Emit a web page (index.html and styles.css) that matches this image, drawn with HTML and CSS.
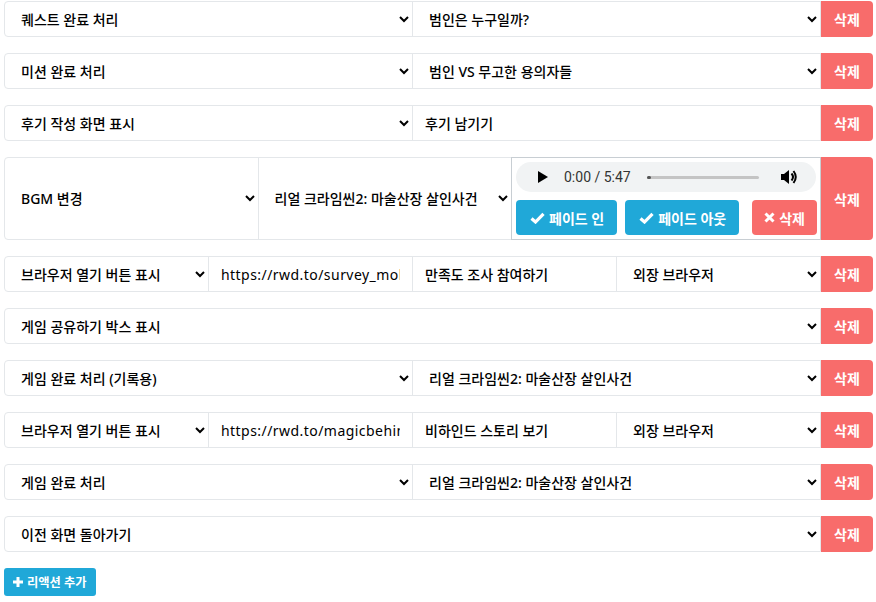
FILE: index.html
```html
<!DOCTYPE html>
<html>
<head>
  <meta charset="UTF-8">
  <title>리액션 설정</title>
  <link rel="stylesheet" href="styles.css">
</head>
<body>
  <div class="reaction-list">
    <div class="reaction-row">
      <select class="field"><option>퀘스트 완료 처리</option></select>
      <select class="field"><option>범인은 누구일까?</option></select>
      <button class="delete-button">삭제</button>
    </div>
    <div class="reaction-row">
      <select class="field"><option>미션 완료 처리</option></select>
      <select class="field"><option>범인 VS 무고한 용의자들</option></select>
      <button class="delete-button">삭제</button>
    </div>
    <div class="reaction-row">
      <select class="field"><option>후기 작성 화면 표시</option></select>
      <input class="field" type="text" value="후기 남기기">
      <button class="delete-button">삭제</button>
    </div>
    <div class="reaction-row tall">
      <select class="field"><option>BGM 변경</option></select>
      <select class="field"><option>리얼 크라임씬2: 마술산장 살인사건</option></select>
      <div class="bgm-panel">
        <div class="player">
          <svg class="play" width="12" height="12" viewBox="0 0 12 12"><path d="M1 0 L11 6 L1 12 Z" fill="#000"/></svg>
          <span class="time">0:00 / 5:47</span>
          <div class="track"><div class="track-fill"></div></div>
          <svg class="volume" width="18" height="16" viewBox="0 0 18 16">
            <path d="M1 5 H4 L9 1 V15 L4 11 H1 Z" fill="#000"/>
            <path d="M11.5 4.5 Q14.5 8 11.5 11.5" stroke="#000" stroke-width="2" fill="none"/>
            <path d="M13.5 2 Q18 8 13.5 14" stroke="#000" stroke-width="2" fill="none"/>
          </svg>
        </div>
        <div class="panel-buttons">
          <button class="small-button blue">
            <svg width="15" height="12" viewBox="0 0 15 12"><path d="M1.5 6.5 L5.5 10 L13.5 1.8" stroke="#fff" stroke-width="3.2" fill="none"/></svg>
            페이드 인
          </button>
          <button class="small-button blue">
            <svg width="15" height="12" viewBox="0 0 15 12"><path d="M1.5 6.5 L5.5 10 L13.5 1.8" stroke="#fff" stroke-width="3.2" fill="none"/></svg>
            페이드 아웃
          </button>
          <button class="small-button red push-right">
            <svg width="11" height="11" viewBox="0 0 11 11"><path d="M1.5 1.5 L9.5 9.5 M9.5 1.5 L1.5 9.5" stroke="#fff" stroke-width="3" fill="none"/></svg>
            삭제
          </button>
        </div>
      </div>
      <button class="delete-button">삭제</button>
    </div>
    <div class="reaction-row">
      <select class="field"><option>브라우저 열기 버튼 표시</option></select>
      <input class="field url" type="text" value="https://rwd.to/survey_mobile">
      <input class="field" type="text" value="만족도 조사 참여하기">
      <select class="field"><option>외장 브라우저</option></select>
      <button class="delete-button">삭제</button>
    </div>
    <div class="reaction-row">
      <select class="field"><option>게임 공유하기 박스 표시</option></select>
      <button class="delete-button">삭제</button>
    </div>
    <div class="reaction-row">
      <select class="field"><option>게임 완료 처리 (기록용)</option></select>
      <select class="field"><option>리얼 크라임씬2: 마술산장 살인사건</option></select>
      <button class="delete-button">삭제</button>
    </div>
    <div class="reaction-row">
      <select class="field"><option>브라우저 열기 버튼 표시</option></select>
      <input class="field url" type="text" value="https://rwd.to/magicbehind">
      <input class="field" type="text" value="비하인드 스토리 보기">
      <select class="field"><option>외장 브라우저</option></select>
      <button class="delete-button">삭제</button>
    </div>
    <div class="reaction-row">
      <select class="field"><option>게임 완료 처리</option></select>
      <select class="field"><option>리얼 크라임씬2: 마술산장 살인사건</option></select>
      <button class="delete-button">삭제</button>
    </div>
    <div class="reaction-row">
      <select class="field"><option>이전 화면 돌아가기</option></select>
      <button class="delete-button">삭제</button>
    </div>
  </div>
  <button class="add-button">
    <svg width="10" height="10" viewBox="0 0 10 10"><path d="M5 0 V10 M0 5 H10" stroke="#fff" stroke-width="3" fill="none"/></svg>
    리액션 추가
  </button>
</body>
</html>
```

FILE: styles.css
```css
body {
  margin: 0;
  padding: 1px 3px 0 4px;
  font-family: "Noto Sans", "Noto Sans CJK KR", sans-serif;
  font-size: 14px;
  font-weight: 500;
  color: #23282c;
  background: #fff;
}
.reaction-row {
  display: flex;
  height: 36px;
  margin-bottom: 16px;
}
.reaction-row.tall {
  height: auto;
}
.field {
  flex: 1 1 0;
  min-width: 0;
  margin: 0;
  padding: 0 12px;
  border: 1px solid #e4e7ea;
  background-color: #fff;
  font-family: inherit;
  font-size: 14px;
  font-weight: 500;
  color: #000;
  box-sizing: border-box;
  outline: none;
}
.field + .field,
.field + .bgm-panel {
  margin-left: -1px;
}
.reaction-row > .field:first-child {
  border-radius: 4px 0 0 4px;
}
.url {
  font-weight: 400;
  letter-spacing: 0.45px;
}
.delete-button {
  flex: 0 0 52px;
  border: none;
  border-radius: 0 4px 4px 0;
  background-color: #f86c6b;
  color: #fff;
  font-family: inherit;
  font-size: 14px;
  font-weight: 700;
  padding: 0;
  cursor: pointer;
}
.bgm-panel {
  flex: 0 0 310px;
  padding: 4px;
  border: 1px solid #c8ced3;
  box-sizing: border-box;
}
.player {
  display: flex;
  align-items: center;
  height: 30px;
  width: 300px;
  border-radius: 15px;
  background-color: #f1f3f4;
  box-sizing: border-box;
  padding: 0 18px 0 21px;
}
.play {
  margin-right: 15px;
}
.time {
  font-family: Roboto, "Noto Sans", sans-serif;
  font-weight: 400;
  font-size: 14px;
  color: #333;
}
.track {
  width: 112px;
  height: 3px;
  margin-left: 16px;
  background-color: #c4c4c4;
  border-radius: 2px;
}
.track-fill {
  width: 4px;
  height: 3px;
  background-color: #555;
  border-radius: 2px;
}
.volume {
  margin-left: auto;
}
.panel-buttons {
  display: flex;
  gap: 8px;
  margin-top: 8px;
}
.small-button {
  display: flex;
  align-items: center;
  gap: 4px;
  height: 35px;
  padding: 0 13px 0 14px;
  border: none;
  border-radius: 4px;
  color: #fff;
  font-family: inherit;
  font-size: 14px;
  font-weight: 700;
  cursor: pointer;
}
.small-button.blue {
  background-color: #20a8d8;
}
.small-button.red {
  background-color: #f86c6b;
  padding: 0 12px;
}
.push-right {
  margin-left: auto;
  margin-right: -1px;
}
.add-button {
  display: flex;
  align-items: center;
  gap: 4px;
  height: 28px;
  padding: 0 9px;
  border: none;
  border-radius: 3px;
  background-color: #20a8d8;
  color: #fff;
  font-family: inherit;
  font-size: 12.25px;
  font-weight: 700;
  cursor: pointer;
}
```
